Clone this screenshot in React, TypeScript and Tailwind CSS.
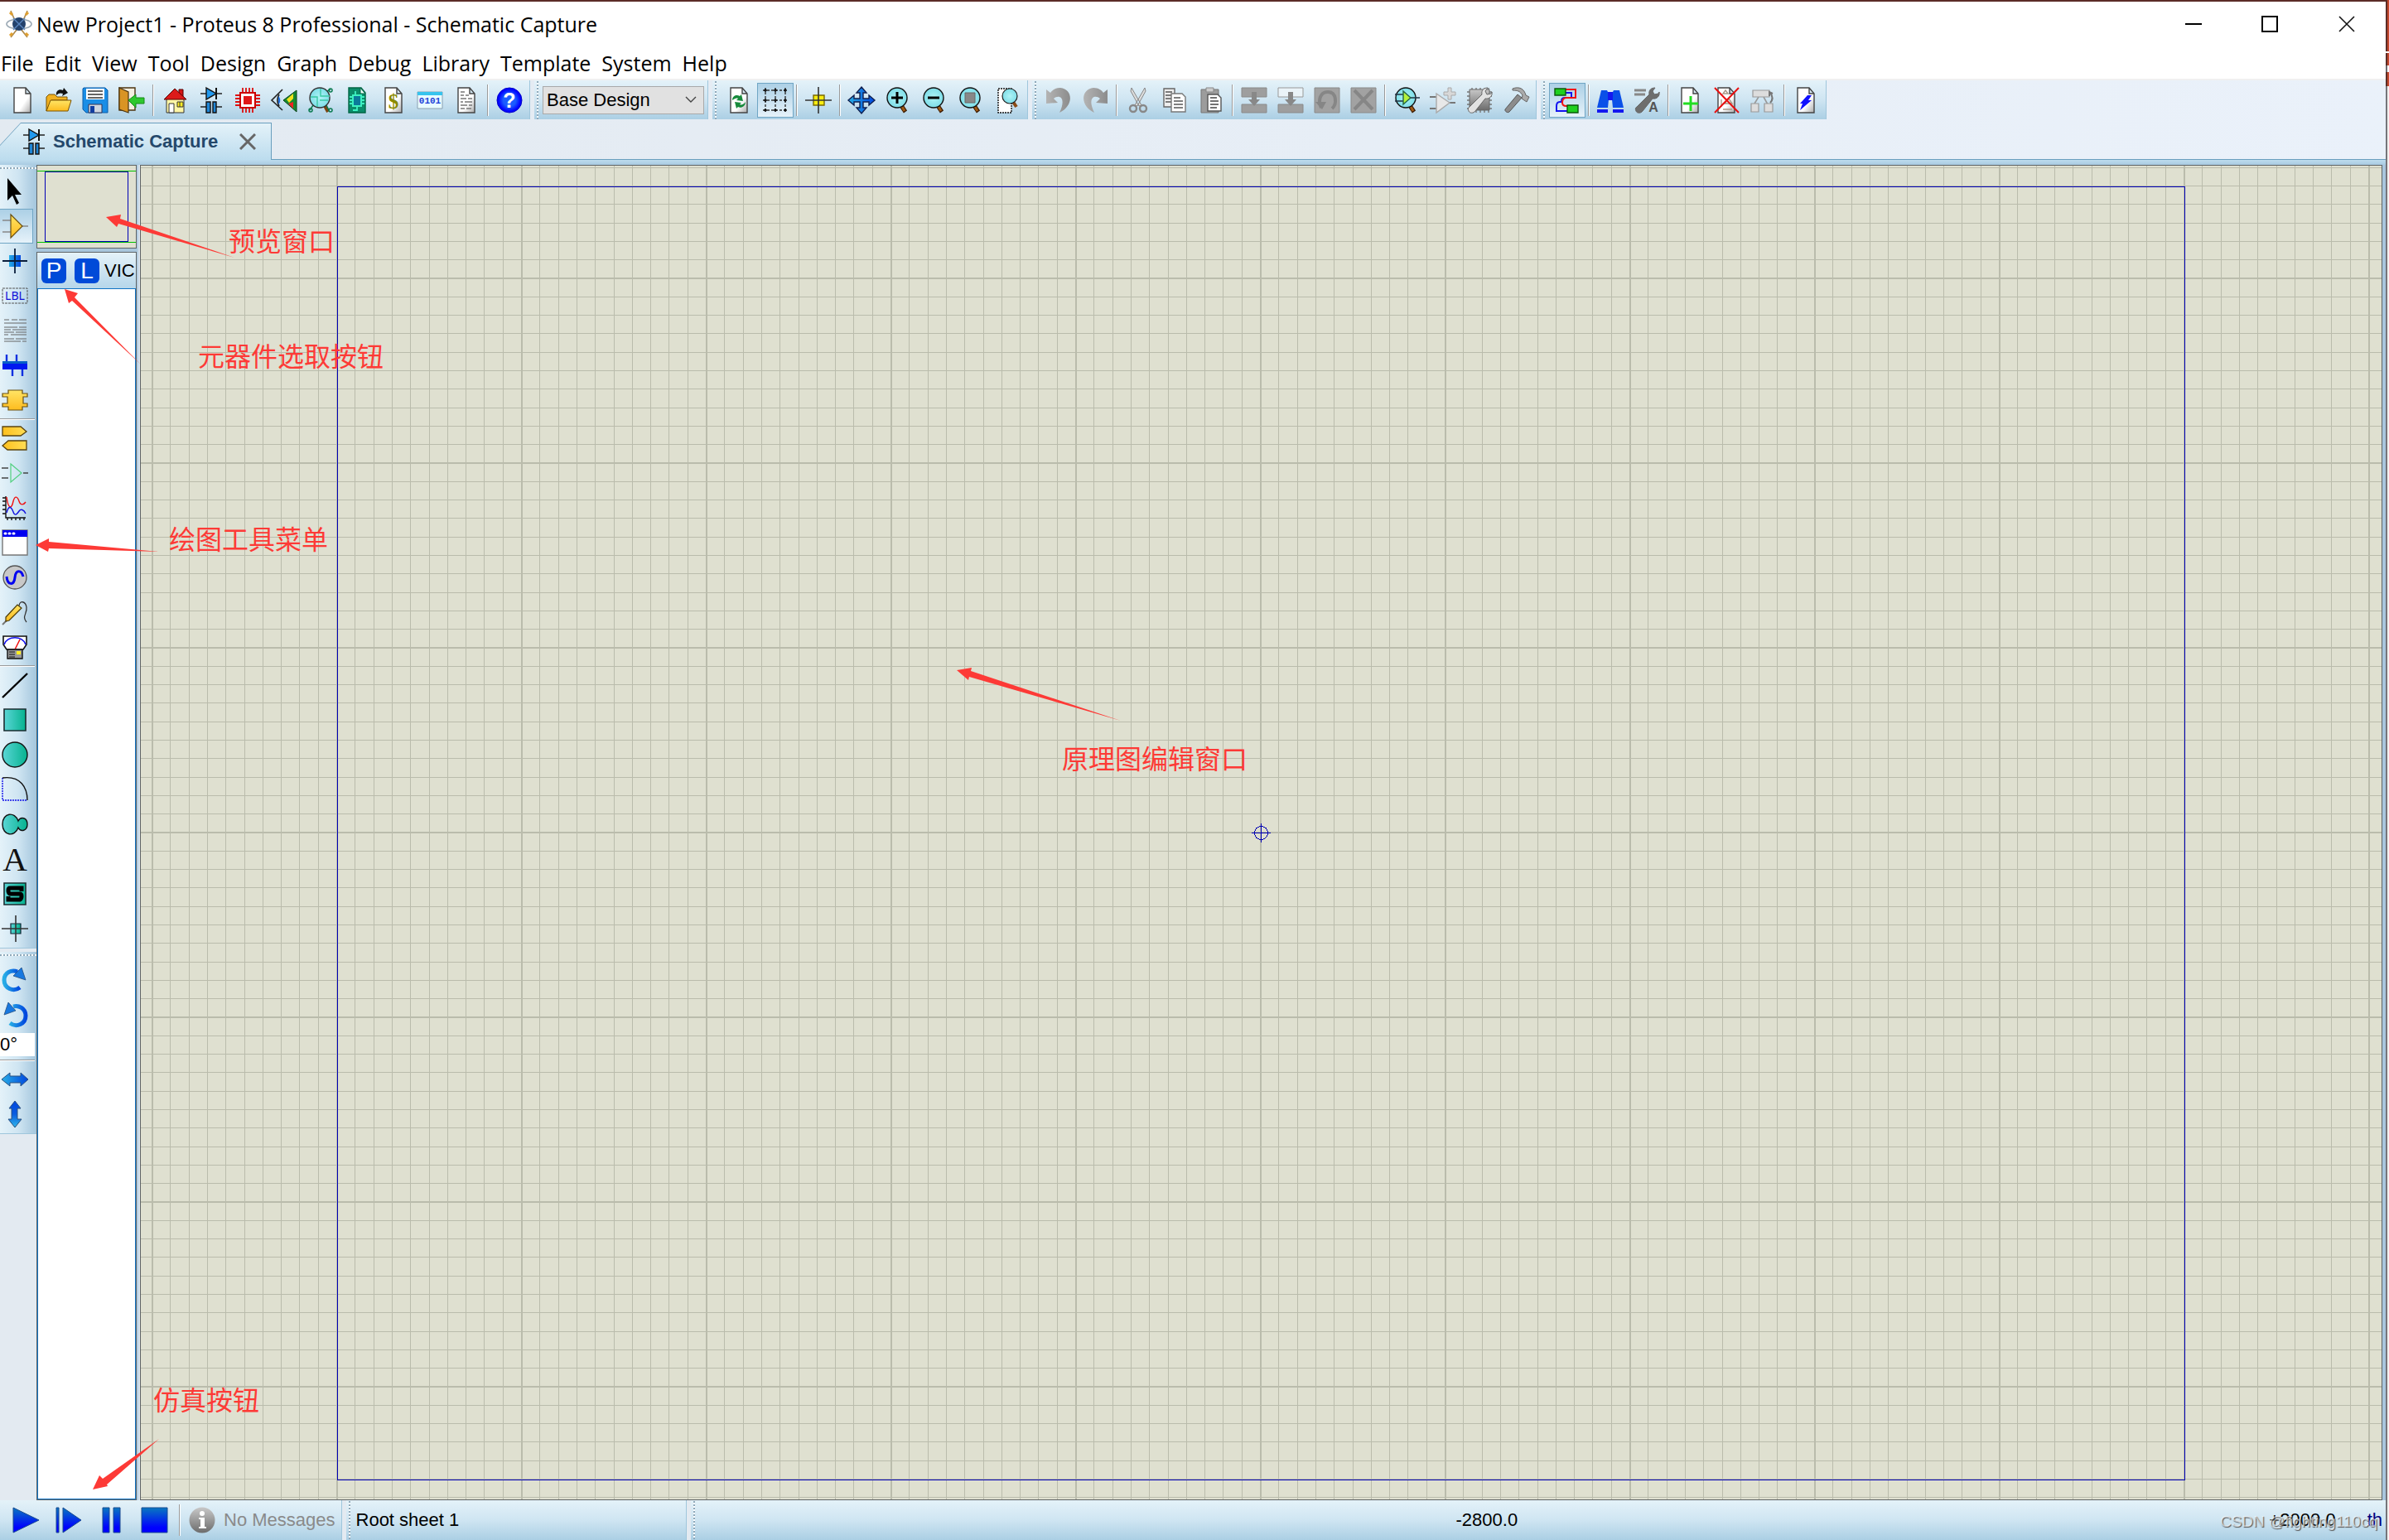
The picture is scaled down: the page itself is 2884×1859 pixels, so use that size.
import React, { useState } from "react";

type IconProps = { children: React.ReactNode };

const Icon = ({ children }: IconProps) => (
  <svg
    viewBox="0 0 32 32"
    className="h-8 w-8 shrink-0 overflow-visible"
    fill="none"
    aria-hidden="true"
  >
    {children}
  </svg>
);

// shared gradients, referenced by id from the icons below
const Gradients = () => (
  <svg className="absolute h-0 w-0" aria-hidden="true">
    <defs>
      <linearGradient id="paper" x1="0" y1="0" x2="1" y2="1">
        <stop offset="0.6" stopColor="#fff" />
        <stop offset="1" stopColor="#aaa" />
      </linearGradient>
      <linearGradient id="yellow" x1="0" y1="0" x2="0" y2="1">
        <stop offset="0" stopColor="#ffe566" />
        <stop offset="1" stopColor="#fdbb1e" />
      </linearGradient>
      <linearGradient id="yellowH" x1="0" y1="0" x2="1" y2="0">
        <stop offset="0" stopColor="#fdc01e" />
        <stop offset="1" stopColor="#ffdd55" />
      </linearGradient>
      <linearGradient id="teal" x1="0" y1="0" x2="1" y2="0">
        <stop offset="0" stopColor="#5ad6d6" />
        <stop offset="1" stopColor="#06b28f" />
      </linearGradient>
      <linearGradient id="blueH" x1="0" y1="0" x2="1" y2="0">
        <stop offset="0" stopColor="#28aee6" />
        <stop offset="1" stopColor="#0046de" />
      </linearGradient>
      <linearGradient id="blueUp" x1="0" y1="0" x2="0" y2="1">
        <stop offset="0" stopColor="#0046de" />
        <stop offset="0.5" stopColor="#0a5ce0" />
        <stop offset="1" stopColor="#2fb8ea" />
      </linearGradient>
      <linearGradient id="play" x1="0" y1="0" x2="0" y2="1">
        <stop offset="0" stopColor="#0878c0" />
        <stop offset="0.8" stopColor="#0000ff" />
      </linearGradient>
      <linearGradient id="gray" x1="0" y1="0" x2="1" y2="0">
        <stop offset="0" stopColor="#b4b4b4" />
        <stop offset="1" stopColor="#8c8c8c" />
      </linearGradient>
      <linearGradient id="grayV" x1="0" y1="0" x2="0" y2="1">
        <stop offset="0" stopColor="#c8c8c8" />
        <stop offset="1" stopColor="#6c6c6c" />
      </linearGradient>
      <radialGradient id="help">
        <stop offset="0.5" stopColor="#1a5cff" />
        <stop offset="0.9" stopColor="#0000ff" />
      </radialGradient>
      <radialGradient id="glass">
        <stop offset="0" stopColor="#b0f4f6" />
        <stop offset="1" stopColor="#7edde8" />
      </radialGradient>
    </defs>
  </svg>
);

const Page = () => (
  <path d="M6 1h14l6 7v23H6zM20 1v7h6" fill="url(#paper)" stroke="#444" strokeWidth="1.4" />
);

const Lens = () => (
  <>
    <path d="M19 21l6 9" stroke="#3a1a00" strokeWidth="5" />
    <path d="M20 22l4 7" stroke="#a05a14" strokeWidth="3" />
    <ellipse cx="15" cy="13" rx="12" ry="12" fill="url(#glass)" stroke="#111" strokeWidth="1.4" />
  </>
);

const Schematic = () => (
  <Icon>
    <path d="M3 8h26M3 24h8M21 24h8" stroke="#222" strokeWidth="1.6" />
    <path d="M10 1l12 7-12 7z" fill="#2299ee" stroke="#111" strokeWidth="1.4" />
    <path d="M22 1v14" stroke="#111" strokeWidth="2" />
    <path d="M10 18h5v13h-5zM18 18h4v13h-4z" fill="#1f86d6" stroke="#111" strokeWidth="1.4" />
  </Icon>
);

const Wrench = ({ fill }: { fill: string }) => (
  <path
    d="M4 24L19 9c-1-5 2-8 7-8l-3 4 2 4 5-1 1-2c1 5-3 9-8 8L11 29c-2 3-7 3-8 0-1-2-1-4 1-5z"
    fill={fill}
    stroke="#666"
    strokeWidth="1"
  />
);

const fileTools = [
  { name: "New", icon: <Icon><Page /></Icon> },
  {
    name: "Open",
    icon: (
      <Icon>
        <path d="M1 29V12l3-3h7l3 3h12v4H7z" fill="#f0b020" stroke="#7a5200" />
        <path d="M6 16h25l-4 13H1z" fill="url(#yellow)" stroke="#7a5200" />
        <path d="M13 10c-1-6 4-8 8-6l1-3 5 6-7 4 1-3c-3-1-5-1-8 2z" fill="#111" />
      </Icon>
    ),
  },
  {
    name: "Save",
    icon: (
      <Icon>
        <path d="M2 1h26l3 3v27H5l-4-4V2z" fill="#1a8ee6" stroke="#0c5ca8" />
        <path d="M5 2h22v13H5z" fill="#fff" />
        <path d="M7 5h18M7 9h18M7 13h18" stroke="#333" strokeWidth="1.3" />
        <path d="M8 21h16v10H8z" fill="#cfd6e0" stroke="#335" />
        <path d="M10 23h5v8h-5z" fill="#123ea0" />
      </Icon>
    ),
  },
  {
    name: "Close",
    icon: (
      <Icon>
        <path d="M1 1h19v27H1z" fill="#f4efe0" stroke="#4c3510" strokeWidth="1.4" />
        <path d="M1 1l11 5v25L1 27z" fill="#d99424" stroke="#4c3510" strokeWidth="1.2" />
        <path d="M12 16l9-7v4h10v7H21v5z" fill="#2ec82e" stroke="#178a17" />
      </Icon>
    ),
  },
];

const moduleTools = [
  {
    name: "Home",
    icon: (
      <Icon>
        <path d="M21 3h5v9h-5z" fill="#d41414" stroke="#500" />
        <path d="M6 14h21v17H6z" fill="#fff6a6" stroke="#333" />
        <path d="M16 2L3 15h27z" fill="#dc1a1a" stroke="#500" />
        <path d="M9 20h6v11H9z" fill="#fff" stroke="#333" />
        <path d="M19 18h7v6h-7zM22 18v6" fill="#ffee22" stroke="#333" />
      </Icon>
    ),
  },
  { name: "Schematic Capture", icon: <Schematic /> },
  {
    name: "PCB Layout",
    icon: (
      <Icon>
        <path
          d="M10 1v30M14 1v30M18 1v30M22 1v30M1 10h30M1 14h30M1 18h30M1 22h30"
          stroke="#dc1010"
          strokeWidth="1.8"
        />
        <path d="M7 7h18v18H7z" fill="#fff" stroke="#c00" strokeWidth="2" />
        <path d="M11 11h10v10H11z" fill="#e01818" />
      </Icon>
    ),
  },
  {
    name: "3D Visualizer",
    icon: (
      <Icon>
        <path d="M14 3L1 16l13 12M10 9c-3 5-3 9 0 14" stroke="#222" strokeWidth="1.6" />
        <path d="M9 11c3 2 3 8 0 10z" fill="#1a6ee0" />
        <path d="M15 16L31 4v26z" fill="#178a30" stroke="#0a4016" />
        <path d="M19 15l8-7v6l-5 5z" fill="#f4e21c" />
        <path d="M21 20l6-2v8z" fill="#e22" />
      </Icon>
    ),
  },
  {
    name: "Gerber Viewer",
    icon: (
      <Icon>
        <path d="M20 21l5 9" stroke="#7a4410" strokeWidth="4" />
        <path d="M3 28l4-6M26 28l-3-6M24 5l4-2" stroke="#0a7a50" strokeWidth="1.5" />
        <circle cx="15" cy="13" r="12" fill="url(#glass)" stroke="#333" strokeWidth="1.4" />
        <path d="M4 12h8v12M16 2v9h11M15 16h10" stroke="#3bc8a4" strokeWidth="1.4" />
        <circle cx="4" cy="28" r="2" stroke="#0a7a50" strokeWidth="1.5" />
        <circle cx="28" cy="28" r="2" stroke="#0a7a50" strokeWidth="1.5" />
        <circle cx="28" cy="4" r="2" stroke="#0a7a50" strokeWidth="1.5" />
      </Icon>
    ),
  },
  {
    name: "Design Explorer",
    icon: (
      <Icon>
        <path d="M6 1h15l5 6v24H6z" fill="#0b8c6a" stroke="#064" strokeWidth="1.4" />
        <path d="M20 1v7h6z" fill="#eafff6" stroke="#064" />
        <path d="M11 10h10v13H11z" fill="#0b7a9a" stroke="#3df0c0" strokeWidth="2" />
        <path d="M7 12h4M7 16h4M7 20h4M21 12h4M21 16h4M21 20h4M16 23v5h-5M14 10V5" stroke="#3df0c0" strokeWidth="1.8" />
      </Icon>
    ),
  },
  {
    name: "Bill of Materials",
    icon: (
      <Icon>
        <Page />
        <text x="16" y="26" textAnchor="middle" fontFamily="Liberation Serif" fontWeight="bold" fontSize="25" fill="#8a8a00">
          $
        </text>
      </Icon>
    ),
  },
  {
    name: "Source Code",
    icon: (
      <Icon>
        <path d="M1 6h30v20H1z" fill="#e8fbff" stroke="#8aa0b0" />
        <path d="M1 6h30v4H1z" fill="#37c4ee" />
        <text x="16" y="20" textAnchor="middle" fontFamily="Liberation Mono" fontWeight="bold" fontSize="11" fill="#1c40d8">
          0101
        </text>
      </Icon>
    ),
  },
  {
    name: "Project Notes",
    icon: (
      <Icon>
        <Page />
        <path
          d="M9 6h5M9 10h4M15 10h4M9 14h7M18 14h5M9 18h3M14 18h9M9 22h8M19 22h4M9 26h5M16 26h6"
          stroke="#777"
          strokeWidth="1.3"
        />
      </Icon>
    ),
  },
];

const helpTools = [
  {
    name: "Help",
    icon: (
      <Icon>
        <circle cx="16" cy="16" r="15" fill="url(#help)" stroke="#0000c8" />
        <text x="16" y="25" textAnchor="middle" fontFamily="Liberation Sans" fontWeight="bold" fontSize="25" fill="#fff">
          ?
        </text>
      </Icon>
    ),
  },
];

const viewTools = [
  {
    name: "Redraw",
    icon: (
      <Icon>
        <Page />
        <path d="M8 16c0-6 6-7 9-5l2-2 2 8-8-1 2-2c-2-1-4 0-7 2zM24 18c0 6-6 8-9 6l-2 2-2-8 8 1-2 2c2 1 5 0 7-3z" fill="#178a3c" />
      </Icon>
    ),
  },
  {
    name: "Toggle Grid",
    active: true,
    icon: (
      <Icon>
        <path d="M4 1v30M16 1v30M28 1v30M1 4h30M1 16h30M1 28h30" stroke="#333" strokeWidth="1.4" strokeDasharray="3 2" />
        <path
          d="M4 2v4M2 4h4M16 2v4M14 4h4M28 2v4M26 4h4M4 14v4M2 16h4M16 14v4M14 16h4M28 14v4M26 16h4M4 26v4M2 28h4M16 26v4M14 28h4M28 26v4M26 28h4"
          stroke="#111"
          strokeWidth="1.6"
        />
      </Icon>
    ),
  },
];

const originTools = [
  {
    name: "False Origin",
    icon: (
      <Icon>
        <path d="M10 10h13v12H10z" fill="#f8ec10" stroke="#7a6a00" strokeWidth="1.4" />
        <path d="M16 0v32M0 16h32" stroke="#333" strokeWidth="1.6" />
      </Icon>
    ),
  },
];

const zoomTools = [
  {
    name: "Pan",
    icon: (
      <Icon>
        <path
          d="M16 0l6 7h-4v7h7v-4l7 6-7 6v-4h-7v7h4l-6 7-6-7h4v-7H7v4l-7-6 7-6v4h7V7h-4z"
          fill="url(#blueH)"
          stroke="#102050"
          strokeWidth="1.4"
        />
      </Icon>
    ),
  },
  { name: "Zoom In", icon: <Icon><Lens /><path d="M8 13h14M15 6v14" stroke="#000" strokeWidth="3" /></Icon> },
  { name: "Zoom Out", icon: <Icon><Lens /><path d="M8 13h14" stroke="#000" strokeWidth="3" /></Icon> },
  {
    name: "Zoom All",
    icon: <Icon><Lens /><path d="M9 7h12v12H9z" fill="#888" stroke="#666" /></Icon>,
  },
  {
    name: "Zoom Area",
    icon: (
      <Icon>
        <path d="M5 2h16v29H5z" fill="#fff" stroke="#111" strokeWidth="1.4" strokeDasharray="2 1" />
        <path d="M23 18l4 6" stroke="#8a4a14" strokeWidth="4" />
        <circle cx="19" cy="11" r="9" fill="url(#glass)" stroke="#222" strokeWidth="1.2" />
      </Icon>
    ),
  },
];

const undoTools = [
  {
    name: "Undo",
    icon: (
      <Icon>
        <path d="M1 3v17l14-1-5-5c6-5 16-2 7 17 17-8 17-28 1-30-6 0-10 3-12 6z" fill="url(#gray)" />
      </Icon>
    ),
  },
  {
    name: "Redo",
    icon: (
      <Icon>
        <path d="M31 3v17l-14-1 5-5c-6-5-16-2-7 17C-2 23-2 3 14 1c6 0 10 3 12 6z" fill="url(#gray)" />
      </Icon>
    ),
  },
];

const clipTools = [
  {
    name: "Cut",
    icon: (
      <Icon>
        <path d="M8 1l12 21-3 1L7 5zM24 1L12 22l3 1L25 5z" fill="#ddd" stroke="#888" />
        <circle cx="10" cy="26" r="4" stroke="#888" strokeWidth="2.4" />
        <circle cx="22" cy="26" r="4" stroke="#888" strokeWidth="2.4" />
      </Icon>
    ),
  },
  {
    name: "Copy",
    icon: (
      <Icon>
        <path d="M3 2h13v22H3z" fill="#eee" stroke="#666" strokeWidth="1.4" />
        <path d="M5 6h8M5 10h8M5 14h8M5 18h8" stroke="#555" strokeWidth="1.6" />
        <path d="M12 8h13l4 4v18H12z" fill="#fff" stroke="#777" strokeWidth="1.4" />
        <path d="M15 13h8M15 17h11M15 21h11M15 25h11" stroke="#555" strokeWidth="1.6" />
      </Icon>
    ),
  },
  {
    name: "Paste",
    icon: (
      <Icon>
        <path d="M4 3h21v28H4z" fill="#9c9c9c" stroke="#777" />
        <path d="M10 1h9v5h-9z" fill="#ccc" stroke="#888" />
        <path d="M12 9h12l4 4v16H12z" fill="#fff" stroke="#555" strokeWidth="1.4" />
        <path d="M15 13h8M15 17h10M15 21h10M15 25h8" stroke="#444" strokeWidth="1.6" />
      </Icon>
    ),
  },
];

const blockTools = [
  {
    name: "Block Copy",
    icon: (
      <Icon>
        <path d="M1 1h30v11H1zM1 21h30v10H1z" fill="#9e9e9e" stroke="#8a8a8a" />
        <path d="M13 6h6v9h4l-7 8-7-8h4z" fill="#888" />
      </Icon>
    ),
  },
  {
    name: "Block Move",
    icon: (
      <Icon>
        <path d="M1 1h30v11H1z" fill="#eaf3f8" stroke="#999" />
        <path d="M1 21h30v10H1z" fill="#9e9e9e" stroke="#8a8a8a" />
        <path d="M13 6h6v9h4l-7 8-7-8h4z" fill="#888" />
      </Icon>
    ),
  },
  {
    name: "Block Rotate",
    icon: (
      <Icon>
        <path d="M1 1h30v30H1z" fill="#a2a2a2" stroke="#8a8a8a" />
        <path d="M9 25c-4-8-2-19 8-19 11 0 11 15 5 20" stroke="#868686" strokeWidth="4" />
        <path d="M2 18h13l-5 9z" fill="#868686" />
      </Icon>
    ),
  },
  {
    name: "Block Delete",
    icon: (
      <Icon>
        <path d="M1 1h30v30H1z" fill="#a2a2a2" stroke="#8a8a8a" />
        <path d="M5 4l22 23M27 4L5 27" stroke="#868686" strokeWidth="4" />
      </Icon>
    ),
  },
];

const libraryTools = [
  {
    name: "Pick Parts",
    icon: (
      <Icon>
        <Lens />
        <path d="M2 9h10M2 17h10M20 13h12" stroke="#234" strokeWidth="1.4" />
        <path d="M12 5l9 8-9 8z" fill="#b4f23c" stroke="#264" strokeWidth="1.4" />
      </Icon>
    ),
  },
  {
    name: "Make Device",
    icon: (
      <Icon>
        <path d="M0 12h8M0 26h8M24 19h7" stroke="#777" strokeWidth="1.8" />
        <path d="M8 8l16 11L8 31z" fill="#e8e8e8" stroke="#aaa" strokeWidth="1.4" />
        <path d="M22 1h4v5h5v4h-5v5h-4v-5h-5V6h5z" fill="#d8d8d8" stroke="#aaa" />
      </Icon>
    ),
  },
  {
    name: "Packaging Tool",
    icon: (
      <Icon>
        <path d="M7 1v30M12 1v30M17 1v30M22 1v30M27 1v30M1 6h30M1 11h30M1 16h30M1 21h30M1 26h30" stroke="#777" strokeWidth="1.4" />
        <path d="M4 3h24v25H4z" fill="url(#grayV)" stroke="#666" />
        <Wrench fill="#e2e2e2" />
      </Icon>
    ),
  },
  {
    name: "Decompose",
    icon: (
      <Icon>
        <path d="M18 9l5 4L8 30c-2 2-6-1-5-3z" fill="#8c8c8c" stroke="#555" />
        <path d="M12 2c8-3 14 0 16 8l4 2-3 6-6-4 1-4c-3-5-6-6-12-6z" fill="#aaa" stroke="#666" />
      </Icon>
    ),
  },
];

const wireTools = [
  {
    name: "Wire Autorouter",
    active: true,
    icon: (
      <Icon>
        <path d="M14 7h7v6h-8c-3 0-4 2-4 4v1H7c-3 0-4 2-4 5v6h15" stroke="#1414f0" strokeWidth="2" />
        <path d="M12 3h14v10H15c-4 0-5 2-5 6 0 3 2 4 5 4h5" stroke="#f01414" strokeWidth="2" />
        <path d="M1 2h13v8H1zM16 22h13v9H16z" fill="#1fd01f" stroke="#0a5a0a" strokeWidth="1.4" />
      </Icon>
    ),
  },
];

const searchTools = [
  {
    name: "Search",
    icon: (
      <Icon>
        <path d="M5 4h7l2 4h4l2-4h7l5 21h-13l-1-10h-4l-1 10H0z" fill="#0a50e8" />
        <path d="M0 27h13v4H0zM19 27h13v4H19zM13 6h6v10h-6z" fill="#1418f0" />
      </Icon>
    ),
  },
  {
    name: "Property Assignment",
    icon: (
      <Icon>
        <path d="M1 4h14M1 9h13" stroke="#888" strokeWidth="3" />
        <Wrench fill="#6e6e6e" />
        <text x="24" y="30" textAnchor="middle" fontFamily="Liberation Sans" fontWeight="bold" fontSize="16" fill="#555">
          A
        </text>
      </Icon>
    ),
  },
];

const sheetTools = [
  {
    name: "New Sheet",
    icon: <Icon><Page /><path d="M17 11v18M8 20h18" stroke="#22dd22" strokeWidth="3" /></Icon>,
  },
  {
    name: "Remove Sheet",
    icon: (
      <Icon>
        <Page />
        <path d="M12 8h6l-3-4zM10 15v9M14 20h9l-4-6zM12 27h11" stroke="#a98" strokeWidth="1.4" />
        <path d="M2 1l29 30M31 1L2 31" stroke="#e81010" strokeWidth="2" />
      </Icon>
    ),
  },
  {
    name: "Exit to Parent",
    icon: (
      <Icon>
        <path d="M11 12L6 20M17 12l5 9" stroke="#999" strokeWidth="1.6" />
        <path d="M4 4h20v8H4zM2 20h9v10H2zM18 20h10v10H18z" fill="#ddd" stroke="#999" strokeWidth="1.2" />
        <path d="M25 19c4-4 3-8 0-12M24 11V6l4 2" stroke="#777" strokeWidth="2" />
      </Icon>
    ),
  },
];

const checkTools = [
  {
    name: "Electrical Rules Check",
    icon: <Icon><Page /><path d="M18 10h5l-4 6h4L9 28l3-8H9z" fill="#1010ff" /></Icon>,
  },
];

const modeTools = [
  { name: "Selection Mode", icon: <Icon><path d="M7 0v27l6-6 5 11 3-2-5-10h8z" fill="#000" /></Icon> },
  {
    name: "Component Mode",
    active: true,
    icon: (
      <Icon>
        <path d="M1 9h10M1 23h10M25 16h7" stroke="#888" strokeWidth="1.5" />
        <path d="M11 2l14 14-14 14z" fill="url(#yellow)" stroke="#6a5010" strokeWidth="1.2" />
      </Icon>
    ),
  },
  {
    name: "Junction Dot Mode",
    icon: (
      <Icon>
        <path d="M9 9h14v14H9z" fill="url(#blueH)" />
        <path d="M16 1v30M1 16h30" stroke="#0a1e3c" strokeWidth="1.8" />
      </Icon>
    ),
  },
  {
    name: "Wire Label Mode",
    icon: (
      <Icon>
        <path d="M1 7h30v18H1z" stroke="#555" strokeDasharray="3 1" />
        <text x="16" y="21" textAnchor="middle" fontFamily="Noto Sans" fontSize="14" fill="#1010d8">
          LBL
        </text>
      </Icon>
    ),
  },
  {
    name: "Text Script Mode",
    icon: (
      <Icon>
        <path
          d="M3 3h6M12 3h7M21 3h9M3 7h27M3 12h16M21 12h9M3 15h8M13 15h17M3 18h12M17 18h13M3 21h5M11 21h19M3 26h12M17 26h13M3 29h20M25 29h5"
          stroke="#666"
          strokeWidth="1.2"
        />
      </Icon>
    ),
  },
  {
    name: "Buses Mode",
    icon: (
      <Icon>
        <path d="M6 3v8M18 3v8M13 20v9M25 20v9" stroke="#1030e0" strokeWidth="2.4" />
        <path d="M1 11h30v10H1z" fill="#0018f0" />
        <path d="M1 11h30v3H1z" fill="#0860c8" />
      </Icon>
    ),
  },
  {
    name: "Subcircuit Mode",
    icon: (
      <Icon>
        <path
          d="M8 4h17v4h6v4h-5v8h5v4h-6v4H8v-4H1v-4h6v-8H1V8h7z"
          fill="url(#yellow)"
          stroke="#6a5010"
          strokeWidth="1.2"
        />
      </Icon>
    ),
  },
];

const deviceTools = [
  {
    name: "Terminals Mode",
    icon: (
      <Icon>
        <path d="M1 2h22l7 6-7 5H1zM30 19H8l-7 6 6 5h23z" fill="url(#yellowH)" stroke="#5a4410" strokeWidth="1.3" />
      </Icon>
    ),
  },
  {
    name: "Device Pins Mode",
    icon: (
      <Icon>
        <path d="M0 10h8M0 22h8M26 16h6" stroke="#444" strokeWidth="1.4" />
        <path d="M11 5l13 11-13 11z" stroke="#52d080" strokeWidth="1.2" />
      </Icon>
    ),
  },
  {
    name: "Graph Mode",
    icon: (
      <Icon>
        <path d="M5 2v26h24M1 4h4M1 8h4M1 13h4M1 18h4M1 23h4M7 28v3M12 28v3M17 28v3M22 28v3M27 28v3" stroke="#111" strokeWidth="1.4" />
        <path d="M6 3c2 15 6 15 8 5 2-7 5-6 7 0s6 4 8 1" stroke="#f01010" strokeWidth="1.4" />
        <path d="M6 22c2-8 5-9 8-1 2 6 5 2 7-1s6-2 8 3" stroke="#1010e0" strokeWidth="1.4" />
      </Icon>
    ),
  },
  {
    name: "Active Popup Mode",
    icon: (
      <Icon>
        <path d="M1 1h30v30H1z" fill="#fff" stroke="#777" strokeWidth="1.4" />
        <path d="M1 1h30v8H1z" fill="#0000f0" />
        <path d="M4 5h1M9 5h1M14 5h1" stroke="#fff" strokeWidth="3" strokeLinecap="round" />
      </Icon>
    ),
  },
  {
    name: "Generator Mode",
    icon: (
      <Icon>
        <circle cx="16" cy="16" r="14" fill="#c8c8c8" stroke="#555" strokeWidth="1.3" />
        <path d="M6 15c1 11 9 11 10 1s8-9 10-1" stroke="#0000f0" strokeWidth="3" />
      </Icon>
    ),
  },
  {
    name: "Probe Mode",
    icon: (
      <Icon>
        <path d="M1 31l6-6" stroke="#777" strokeWidth="2" />
        <path d="M5 22L19 7l5 4L9 26l-4 1z" fill="url(#yellow)" stroke="#4a3a08" strokeWidth="1.2" />
        <path d="M21 8c1-7 8-5 9 2 1 8-6 11 0 18" stroke="#333" strokeWidth="1.3" />
      </Icon>
    ),
  },
  {
    name: "Virtual Instruments Mode",
    icon: (
      <Icon>
        <path d="M2 3h28v10l-4 6H6l-4-6z" fill="#fff" stroke="#111" strokeWidth="1.6" />
        <path d="M3 13C7 2 25 2 29 13" stroke="#1010f0" strokeWidth="1.6" />
        <path d="M22 7l-6 12" stroke="#f01010" strokeWidth="1.6" />
        <path d="M7 19h18v11H7z" fill="#999" stroke="#111" strokeWidth="1.4" />
        <path d="M9 22h7M9 25h7M9 28h7" stroke="#111" strokeWidth="1.2" />
        <path d="M18 21h5v4h-5z" fill="#ffee20" />
      </Icon>
    ),
  },
];

const drawTools = [
  { name: "2D Line Mode", icon: <Icon><path d="M1 31L31 2" stroke="#000" strokeWidth="2.4" /></Icon> },
  {
    name: "2D Box Mode",
    icon: <Icon><path d="M3 3h26v26H3z" fill="url(#teal)" stroke="#1c2c30" strokeWidth="1.6" /></Icon>,
  },
  {
    name: "2D Circle Mode",
    icon: <Icon><circle cx="16" cy="16" r="15" fill="url(#teal)" stroke="#111" strokeWidth="1.4" /></Icon>,
  },
  {
    name: "2D Arc Mode",
    icon: (
      <Icon>
        <path d="M1 2v27h30" stroke="#1010e8" strokeWidth="1.4" strokeDasharray="2 1" />
        <path d="M1 2c22-3 30 12 30 27" stroke="#111" strokeWidth="1.4" />
      </Icon>
    ),
  },
  {
    name: "2D Path Mode",
    icon: (
      <Icon>
        <path
          d="M20 12c3-6 11-4 11 4s-8 10-11 4c-4 12-19 10-19-4s15-16 19-4z"
          fill="url(#teal)"
          stroke="#111"
          strokeWidth="1.4"
        />
      </Icon>
    ),
  },
  {
    name: "2D Text Mode",
    icon: (
      <Icon>
        <text x="16" y="30" textAnchor="middle" fontFamily="Liberation Serif" fontSize="41" fill="#111">
          A
        </text>
      </Icon>
    ),
  },
  {
    name: "2D Symbol Mode",
    icon: (
      <Icon>
        <path d="M3 3h26v26H3z" fill="url(#teal)" stroke="#1c2c30" strokeWidth="1.6" />
        <path d="M24 13V9H10q-2 0-2 3t2 4h12q2 0 2 3t-2 4H8v-4" stroke="#000" strokeWidth="5" />
      </Icon>
    ),
  },
  {
    name: "2D Marker Mode",
    icon: (
      <Icon>
        <path d="M11 10h12v12H11z" fill="url(#teal)" stroke="#123" strokeWidth="1.2" />
        <path d="M17 0v32M0 16h32" stroke="#333" strokeWidth="1.6" />
      </Icon>
    ),
  },
];

const rotateTools = [
  {
    name: "Rotate Clockwise",
    icon: (
      <Icon>
        <path d="M22 25c-8 6-19 1-19-9C3 7 12 3 19 6" stroke="url(#blueH)" strokeWidth="5" />
        <path d="M24 1l5 15-15-5z" fill="#1878e0" stroke="#2a5080" strokeWidth="0.8" />
      </Icon>
    ),
  },
  {
    name: "Rotate Anti-clockwise",
    icon: (
      <Icon>
        <path d="M10 26c8 6 19 1 19-9 0-9-9-13-15-11" stroke="url(#blueH)" strokeWidth="5" />
        <path d="M8 1L3 16l14-5z" fill="#1878e0" stroke="#2a5080" strokeWidth="0.8" />
      </Icon>
    ),
  },
];

const mirrorTools = [
  {
    name: "X-Mirror",
    icon: (
      <Icon>
        <path d="M0 16l10-8v4h13V8l9 8-9 8v-4H10v4z" fill="url(#blueH)" stroke="#2a5080" />
      </Icon>
    ),
  },
  {
    name: "Y-Mirror",
    icon: (
      <Icon>
        <path d="M16 0l7 9h-4v13h5l-8 10-8-10h4V9H9z" fill="url(#blueUp)" stroke="#2a5080" />
      </Icon>
    ),
  },
];

const simTools = [
  { name: "Run the simulation", icon: <Icon><path d="M1 1l31 15L1 31z" fill="url(#play)" stroke="#1a4a90" /></Icon> },
  {
    name: "Advance the simulation",
    icon: <Icon><path d="M1 1h3v30H1zM9 1l22 15L9 31z" fill="url(#play)" stroke="#1a4a90" /></Icon>,
  },
  {
    name: "Pause the simulation",
    icon: <Icon><path d="M5 1h8v30H5zM18 1h8v30h-8z" fill="url(#play)" stroke="#1a4a90" /></Icon>,
  },
  { name: "Stop the simulation", icon: <Icon><path d="M0 1h31v30H0z" fill="url(#play)" stroke="#1a4a90" /></Icon> },
];

const menus = ["File", "Edit", "View", "Tool", "Design", "Graph", "Debug", "Library", "Template", "System", "Help"];

const minorX = [22, 45, 67, 89, 112, 134, 156, 178, 201];
const minorY = [23, 45, 67, 90, 112, 134, 157, 179, 201];

type Tool = { name: string; icon: React.ReactNode; active?: boolean };

const ToolButtons = ({ tools }: { tools: Tool[] }) => (
  <>
    {tools.map((tool) => (
      <button
        key={tool.name}
        type="button"
        aria-label={tool.name}
        className={
          tool.active
            ? "flex h-[42px] w-11 items-center justify-center border border-[#6fa5c4] bg-gradient-to-b from-[#acd0e6] to-[#e6f2fa]"
            : "flex h-[42px] w-11 items-center justify-center"
        }
      >
        {tool.icon}
      </button>
    ))}
  </>
);

const SideButtons = ({ tools }: { tools: Tool[] }) => (
  <>
    {tools.map((tool) => (
      <button
        key={tool.name}
        type="button"
        aria-label={tool.name}
        className={
          tool.active
            ? "flex h-[42px] w-10 items-center border border-l-0 border-[#6fa5c4] bg-gradient-to-b from-[#acd0e6] to-[#e6f2fa] pl-0.5"
            : "flex h-[42px] w-10 items-center pl-0.5"
        }
      >
        {tool.icon}
      </button>
    ))}
  </>
);

const Sep = () => <span className="mx-[3px] h-[38px] w-0.5 border-l border-[#9a9a9a] bg-white" />;

const SideSep = () => <span className="my-px block h-0.5 w-[42px] border-t border-[#9a9a9a] bg-white" />;

const Group = ({ grip = true, children }: { grip?: boolean; children: React.ReactNode }) => (
  <div className="flex h-[47px] items-center border-r border-[#9fc6dc] bg-gradient-to-b from-[#e4f2f9] via-[#cfe5f2] to-[#abcfe4] pr-0.5">
    {grip ? (
      <span className="mr-[5px] ml-[3px] h-[46px] w-0.5 bg-[repeating-linear-gradient(to_bottom,#8fa9ba_0_2px,#ffffff_2px_4px)]" />
    ) : (
      <span className="w-[5px]" />
    )}
    {children}
  </div>
);

const CanvasView = () => (
  <div className="relative min-h-0 min-w-0 flex-1 border border-[#5f6466] bg-[#dfe0d0]">
    <svg className="absolute inset-0 h-full w-full" shapeRendering="crispEdges" aria-label="Root sheet">
      <defs>
        <pattern id="grid" x="13" y="135" width="223" height="223" patternUnits="userSpaceOnUse">
          <g fill="#babcac">
            <rect width="2" height="223" />
            <rect width="223" height="2" />
            {minorX.map((x) => (
              <rect key={x} x={x} width="1" height="223" />
            ))}
            {minorY.map((y) => (
              <rect key={y} y={y} width="223" height="1" />
            ))}
          </g>
        </pattern>
      </defs>
      <rect width="100%" height="100%" fill="url(#grid)" />
      <g fill="none" stroke="#0000b4">
        <rect x="237.5" y="25.5" width="2230" height="1561" />
        <circle cx="1352.5" cy="805.5" r="8" />
        <path d="M1341 805.5h23M1352.5 794v23" />
      </g>
    </svg>
  </div>
);

// red callouts drawn over the whole window
const Callouts = () => (
  <div className="pointer-events-none absolute inset-0 font-['Noto_Sans_CJK_SC',sans-serif] text-[32px] leading-10 whitespace-nowrap text-[#fd3a36]">
    <svg className="absolute inset-0 h-full w-full" fill="#fd3a36" aria-hidden="true">
      <path d="M128 262l18-3-1 5 138 47-140-41-2 4z" />
      <path d="M78 349l16 5-4 5 79 80-82-76-4 3z" />
      <path d="M43 658l16-8v4l133 12-133-4-1 4z" />
      <path d="M1155 809l18-3-1 4 181 60-183-53-1 4z" />
      <path d="M112 1798l8-17 4 4 68-48-63 55 1 2z" />
    </svg>
    <span className="absolute top-[269px] left-[276px]">预览窗口</span>
    <span className="absolute top-[408px] left-[239px]">元器件选取按钮</span>
    <span className="absolute top-[629px] left-[204px]">绘图工具菜单</span>
    <span className="absolute top-[894px] left-[1282px]">原理图编辑窗口</span>
    <span className="absolute top-[1668px] left-[185px]">仿真按钮</span>
  </div>
);

const App = () => {
  const [variant, setVariant] = useState("Base Design");
  const [angle, setAngle] = useState("0°");

  return (
    <div className="relative flex h-screen overflow-hidden bg-[#e3eaf1] font-['Liberation_Sans',Arial,sans-serif] text-[22px] leading-7 text-black">
      <Gradients />
      <div className="flex min-w-0 flex-1 flex-col border-t-2 border-[#5b2c27]">
        <header className="border-b-2 border-[#f0f0f0] bg-white font-['Open_Sans','Segoe_UI',sans-serif]">
          <div className="flex h-[54px] items-center">
            <svg viewBox="0 0 32 38" className="ml-[7px] h-[38px] w-8" fill="none" aria-hidden="true">
              <path d="M6 3c4 12 12 22 20 32M26 3C22 15 14 25 6 35" stroke="#b08a4a" strokeWidth="1.6" />
              <ellipse cx="16" cy="19" rx="15" ry="6" stroke="#9aa8b4" strokeWidth="1.6" />
              <circle cx="16" cy="19" r="8" fill="#24426c" />
              <path d="M9 12l14 14M23 12L9 26" stroke="#5a86c0" strokeWidth="1.4" />
              <path d="M5 5l3 3M27 5l-3 3M5 33l3-3M27 33l-3-3" stroke="#e0a030" strokeWidth="3" />
            </svg>
            <h1 className="ml-[5px] flex-1 text-[25px]">New Project1 - Proteus 8 Professional - Schematic Capture</h1>
            <button type="button" aria-label="Minimize" className="flex h-full w-[92px] items-center justify-center">
              <span className="h-0.5 w-5 bg-black" />
            </button>
            <button type="button" aria-label="Maximize" className="flex h-full w-[92px] items-center justify-center">
              <span className="h-5 w-5 border-2 border-black" />
            </button>
            <button type="button" aria-label="Close" className="flex h-full w-[94px] items-center justify-center">
              <svg viewBox="0 0 20 20" className="h-5 w-5" aria-hidden="true">
                <path d="M1 1l18 18M19 1L1 19" stroke="#111" strokeWidth="1.6" />
              </svg>
            </button>
          </div>
          <nav className="flex h-[39px] items-center gap-[13px] pl-px text-[25px]">
            {menus.map((menu) => (
              <button key={menu} type="button">
                {menu}
              </button>
            ))}
          </nav>
        </header>

        <div className="flex gap-[5px] bg-gradient-to-r from-[#e3eaf1] to-[#eaf1fa]">
          <Group grip={false}>
            <ToolButtons tools={fileTools} />
            <Sep />
            <ToolButtons tools={moduleTools} />
            <Sep />
            <ToolButtons tools={helpTools} />
          </Group>
          <Group>
            <div className="relative w-[197px]">
              <select
                aria-label="Design variant"
                value={variant}
                onChange={(e) => setVariant(e.target.value)}
                className="block h-[34px] w-[195px] appearance-none border border-[#a9a9a9] bg-[#e1e1e1] pl-1 text-[22px] leading-7"
              >
                <option>Base Design</option>
              </select>
              <svg viewBox="0 0 14 8" className="pointer-events-none absolute top-3 right-[11px] h-2 w-3.5" fill="none" aria-hidden="true">
                <path d="M1 1l6 6 6-6" stroke="#444" strokeWidth="1.4" />
              </svg>
            </div>
          </Group>
          <Group>
            <ToolButtons tools={viewTools} />
            <Sep />
            <ToolButtons tools={originTools} />
            <Sep />
            <ToolButtons tools={zoomTools} />
          </Group>
          <Group>
            <ToolButtons tools={undoTools} />
            <Sep />
            <ToolButtons tools={clipTools} />
            <Sep />
            <ToolButtons tools={blockTools} />
            <Sep />
            <ToolButtons tools={libraryTools} />
          </Group>
          <Group>
            <ToolButtons tools={wireTools} />
            <Sep />
            <ToolButtons tools={searchTools} />
            <Sep />
            <ToolButtons tools={sheetTools} />
            <Sep />
            <ToolButtons tools={checkTools} />
          </Group>
        </div>

        <div className="flex h-[49px] items-end bg-gradient-to-r from-[#e3eaf1] to-[#eaf1fa]">
          <div className="h-[45px] w-[328px] bg-[#6a9fbe] pt-px pr-px [clip-path:polygon(0_27px,25px_0,100%_0,100%_100%,0_100%)]">
            <div className="flex h-full items-center bg-gradient-to-b from-[#e4f2f9] to-[#bcdcee] pl-[25px] [clip-path:polygon(0_27px,25px_0,100%_0,100%_100%,0_100%)]">
              <Schematic />
              <span className="ml-[7px] font-bold text-[#24486b]">Schematic Capture</span>
              <button type="button" aria-label="Close tab" className="ml-[26px]">
                <svg viewBox="0 0 20 20" className="h-5 w-5" aria-hidden="true">
                  <path d="M1 1l18 18M19 1L1 19" stroke="#666" strokeWidth="3" />
                </svg>
              </button>
            </div>
          </div>
          <div className="h-px flex-1 bg-[#6a9fbe]" />
        </div>
        <div className="h-1.5 bg-gradient-to-b from-[#bddcee] to-[#a9cbe2]" />

        <main className="flex min-h-0 flex-1">
          <aside className="flex w-11 flex-col">
            <div className="border-b border-[#9fc6dc] bg-gradient-to-r from-[#e4f2f9] via-[#cfe5f2] to-[#a4c6dd] pt-[3px] pb-0.5">
              <div className="mb-[6px] h-0.5 bg-[repeating-linear-gradient(to_right,#8fa9ba_0_2px,#ffffff_2px_4px)]" />
              <SideButtons tools={modeTools} />
              <SideSep />
              <SideButtons tools={deviceTools} />
              <SideSep />
              <SideButtons tools={drawTools} />
            </div>
            <div className="mt-1 border-b border-[#9fc6dc] bg-gradient-to-r from-[#e4f2f9] via-[#cfe5f2] to-[#a4c6dd] pt-[3px] pb-0.5">
              <div className="mb-2 h-0.5 bg-[repeating-linear-gradient(to_right,#8fa9ba_0_2px,#ffffff_2px_4px)]" />
              <SideButtons tools={rotateTools} />
              <input
                aria-label="Rotation angle"
                value={angle}
                onChange={(e) => setAngle(e.target.value)}
                className="mt-px mb-1 block h-7 w-[42px] bg-white p-0 text-[22px]"
              />
              <SideSep />
              <SideButtons tools={mirrorTools} />
            </div>
          </aside>

          <section className="flex w-[125px] flex-col bg-gradient-to-r from-[#a9c6dd] from-97% to-[#e8eef4] pr-1">
            <div className="h-[101px] border border-[#5f6466] bg-[#dfe0d0] py-1.5">
              <div className="h-full border-y border-[#00c000] px-[9px]">
                <div className="h-full border border-[#0000b4]" />
              </div>
            </div>
            <div className="mt-1 flex min-h-0 flex-1 flex-col border border-[#5f6466]">
              <div className="flex h-[43px] items-center gap-2.5 overflow-hidden bg-gradient-to-b from-[#e4f2f9] to-[#b6d6ea] pl-[5px]">
                <button
                  type="button"
                  aria-label="Pick devices"
                  className="h-[30px] w-[30px] shrink-0 rounded-md bg-[#004ad8] text-[28px] leading-[30px] text-white"
                >
                  P
                </button>
                <button
                  type="button"
                  aria-label="Library manager"
                  className="h-[30px] w-[30px] shrink-0 rounded-md bg-[#004ad8] text-[28px] leading-[30px] text-white"
                >
                  L
                </button>
                <span className="-ml-1">VIC</span>
              </div>
              <div className="flex-1 border border-[#1173c4] bg-white" />
            </div>
          </section>

          <CanvasView />
          <div className="w-1 bg-[#a9c6dd]" />
        </main>

        <footer className="flex h-12 items-center bg-gradient-to-b from-[#e4f2f9] via-[#cfe5f2] to-[#abcfe4]">
          <div className="flex h-full items-center border-r border-[#9fc6dc] pr-[7px] pl-[5px]">
            {simTools.map((tool) => (
              <button key={tool.name} type="button" aria-label={tool.name} className="flex h-11 w-[52px] items-center justify-center">
                {tool.icon}
              </button>
            ))}
            <Sep />
            <span className="ml-[7px] flex items-center gap-2.5 text-[#8a8a8a]">
              <Icon>
                <circle cx="16" cy="16" r="15.5" fill="url(#grayV)" />
                <path d="M12 13h7v11h2v2h-9v-2h2v-9h-2z" fill="#fff" />
                <circle cx="16" cy="8" r="3" fill="#fff" />
              </Icon>
              No Messages
            </span>
          </div>
          <div className="h-full w-[5px] bg-[#e3eaf1]" />
          <div className="flex h-full w-[411px] items-center border-r border-[#9fc6dc]">
            <span className="mr-[7px] ml-[3px] h-[46px] w-0.5 bg-[repeating-linear-gradient(to_bottom,#8fa9ba_0_2px,#ffffff_2px_4px)]" />
            Root sheet 1
          </div>
          <div className="h-full w-[5px] bg-[#e3eaf1]" />
          <span className="ml-[3px] h-[46px] w-0.5 bg-[repeating-linear-gradient(to_bottom,#8fa9ba_0_2px,#ffffff_2px_4px)]" />
          <div className="relative flex min-w-0 flex-1 items-center justify-end pr-1">
            <span className="mr-auto ml-[919px]">-2800.0</span>
            <span>+2000.0</span>
            <span className="ml-[38px] text-[#000080]">th</span>
            <span className="absolute top-0.5 right-2.5 text-[19px] text-white/60 [text-shadow:1px_1px_1px_#555]">
              CSDN @fighting110cq
            </span>
          </div>
        </footer>
      </div>

      <div className="flex w-1 flex-col">
        <div className="h-[62px] border-l-2 border-[#5b2c27] bg-[#c2492d]" />
        <div className="h-0.5 bg-white" />
        <div className="h-[15px] border-l-2 border-[#5b2c27] bg-[#c2492d]" />
        <div className="h-2 border-l-2 border-[#6b6b70] bg-white" />
        <div className="h-[17px] border-l-2 border-[#5b2c27] bg-[#c2492d]" />
        <div className="flex-1 border-l-2 border-[#75757a] bg-[#f3f0ef]" />
      </div>

      <Callouts />
    </div>
  );
};

export default App;
